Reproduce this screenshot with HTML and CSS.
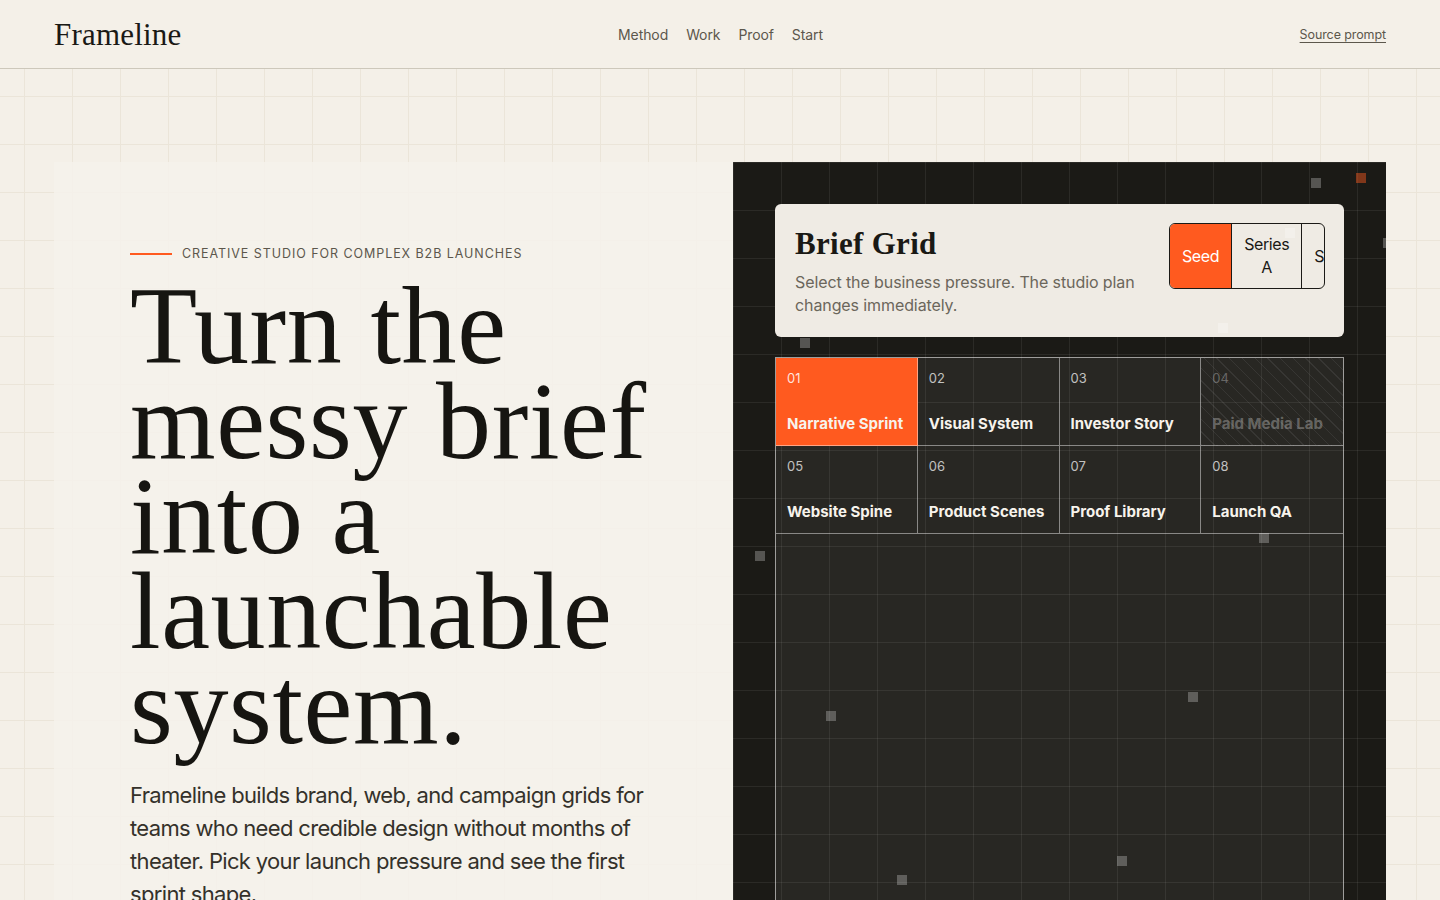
FILE: index.html
```html
<!DOCTYPE html>
<html lang="en">
<head>
    <meta charset="UTF-8">
    <meta name="viewport" content="width=device-width, initial-scale=1.0">
    <title>Frameline</title>
    <link rel="stylesheet" href="styles.css">
</head>
<body>

    <header class="site-header">
        <a class="logo" href="#">Frameline</a>
        <nav class="main-nav">
            <a href="#method">Method</a>
            <a href="#work">Work</a>
            <a href="#proof">Proof</a>
            <a href="#start">Start</a>
        </nav>
        <a class="source-link" href="#">Source prompt</a>
    </header>

    <main class="hero">
        <section class="hero-copy">
            <p class="eyebrow">Creative studio for complex B2B launches</p>
            <h1>Turn the messy brief into a launchable system.</h1>
            <p class="lede">Frameline builds brand, web, and campaign grids for teams who need credible design without months of theater. Pick your launch pressure and see the first sprint shape.</p>
        </section>

        <section class="studio-panel">
            <!-- Brief card with the stage picker -->
            <div class="brief-card">
                <div class="brief-text">
                    <h2>Brief Grid</h2>
                    <p>Select the business pressure. The studio plan changes immediately.</p>
                </div>
                <div class="stage-picker">
                    <button class="stage active">Seed</button>
                    <button class="stage">Series A</button>
                    <button class="stage">Scale</button>
                    <button class="stage">Enterprise</button>
                </div>
            </div>

            <!-- Sprint modules -->
            <div class="plan-board">
                <div class="tile-grid">
                    <div class="tile active"><span class="tile-num">01</span><span class="tile-name">Narrative Sprint</span></div>
                    <div class="tile"><span class="tile-num">02</span><span class="tile-name">Visual System</span></div>
                    <div class="tile"><span class="tile-num">03</span><span class="tile-name">Investor Story</span></div>
                    <div class="tile locked"><span class="tile-num">04</span><span class="tile-name">Paid Media Lab</span></div>
                    <div class="tile"><span class="tile-num">05</span><span class="tile-name">Website Spine</span></div>
                    <div class="tile"><span class="tile-num">06</span><span class="tile-name">Product Scenes</span></div>
                    <div class="tile"><span class="tile-num">07</span><span class="tile-name">Proof Library</span></div>
                    <div class="tile"><span class="tile-num">08</span><span class="tile-name">Launch QA</span></div>
                </div>
            </div>

            <!-- floating particles -->
            <span class="dot" style="left: 578px; top: 16px;"></span>
            <span class="dot hot" style="left: 623px; top: 11px;"></span>
            <span class="dot" style="left: 650px; top: 76px;"></span>
            <span class="dot" style="left: 552px; top: 66px;"></span>
            <span class="dot" style="left: 485px; top: 161px;"></span>
            <span class="dot" style="left: 67px; top: 176px;"></span>
            <span class="dot" style="left: 22px; top: 389px;"></span>
            <span class="dot" style="left: 526px; top: 371px;"></span>
            <span class="dot" style="left: 455px; top: 530px;"></span>
            <span class="dot" style="left: 93px; top: 549px;"></span>
            <span class="dot" style="left: 384px; top: 694px;"></span>
            <span class="dot" style="left: 164px; top: 713px;"></span>
        </section>
    </main>

</body>
</html>
```

FILE: styles.css
```css
body {
    margin: 0;
    font-family: Inter, "Noto Sans", sans-serif;
    color: #1a1915;
    background-color: #f4f0e8;
    background-image:
        linear-gradient(to right, #ebe5d9 1px, transparent 1px),
        linear-gradient(to bottom, #ebe5d9 1px, transparent 1px);
    background-size: 48px 48px;
    background-position: 24px 0;
}

a {
    color: inherit;
    text-decoration: none;
}

/* header */

.site-header {
    display: grid;
    grid-template-columns: 1fr auto 1fr;
    align-items: center;
    height: 68px;
    padding: 0 54px;
    background-color: #f4f0e8;
    border-bottom: 1px solid #cdc8bb;
}

.logo {
    font-family: "Liberation Serif", serif;
    font-size: 31px;
    letter-spacing: 0.2px;
    color: #1a1915;
    justify-self: start;
    padding-top: 2px;
}

.main-nav {
    display: flex;
    gap: 18px;
    padding-left: 1px;
}

.main-nav a {
    font-size: 14px;
    letter-spacing: -0.1px;
    color: #5c574c;
}

.source-link {
    justify-self: end;
    font-size: 12.5px;
    letter-spacing: -0.1px;
    color: #5c574c;
    text-decoration: underline;
    text-underline-offset: 3px;
}

/* hero */

.hero {
    display: grid;
    grid-template-columns: 679px 1fr;
    padding: 93px 54px 0;
}

.hero-copy {
    background-color: rgba(245, 241, 234, 0.88);
    padding: 84px 40px 0 76px;
}

.eyebrow {
    display: flex;
    align-items: center;
    gap: 10px;
    margin: 0 0 17px;
    font-size: 12.5px;
    line-height: 16px;
    letter-spacing: 0.075em;
    text-transform: uppercase;
    color: #5c574c;
}

.eyebrow::before {
    content: "";
    width: 42px;
    height: 2px;
    background-color: #ff5a1f;
}

h1 {
    margin: 0;
    max-width: 540px;
    font-family: "Liberation Serif", serif;
    font-weight: 400;
    font-size: 110px;
    line-height: 95px;
    letter-spacing: 0.6px;
    color: #161511;
}

.lede {
    margin: 25px 0 0;
    max-width: 525px;
    font-size: 22px;
    line-height: 33px;
    letter-spacing: -0.03em;
    color: #34312a;
}

/* dark studio panel */

.studio-panel {
    position: relative;
    overflow: hidden;
    min-height: 820px;
    padding: 42px;
    background-color: #1b1a16;
    background-image:
        linear-gradient(to right, rgba(255, 255, 255, 0.07) 1px, transparent 1px),
        linear-gradient(to bottom, rgba(255, 255, 255, 0.07) 1px, transparent 1px);
    background-size: 48px 48px;
}

.brief-card {
    display: flex;
    justify-content: space-between;
    align-items: flex-start;
    gap: 20px;
    padding: 19px 19px 20px 20px;
    background-color: #efebe4;
    border-radius: 6px;
}

.brief-text h2 {
    margin: 2px 0 0;
    font-family: "Liberation Serif", serif;
    font-weight: 700;
    font-size: 31px;
    line-height: 38px;
    letter-spacing: 0.3px;
    color: #1a1915;
}

.brief-text p {
    margin: 8px 0 0;
    max-width: 345px;
    font-size: 16px;
    line-height: 23px;
    letter-spacing: -0.1px;
    color: #6b665b;
}

.stage-picker {
    display: flex;
    flex: none;
    width: 154px;
    overflow: hidden;
    border: 1px solid #1b1a16;
    border-radius: 6px;
}

.stage {
    flex: none;
    max-width: 70px;
    padding: 9px 12px;
    font-family: Inter, "Noto Sans", sans-serif;
    font-size: 16px;
    line-height: 23px;
    letter-spacing: -0.4px;
    color: #1a1915;
    background: none;
    border: none;
    border-right: 1px solid #1b1a16;
    cursor: pointer;
}

.stage.active {
    background-color: #ff5a1f;
    color: white;
}

.plan-board {
    margin-top: 20px;
    min-height: 700px;
    background-color: rgba(255, 255, 255, 0.06);
    border: 1px solid rgba(255, 255, 255, 0.55);
}

.tile-grid {
    display: grid;
    grid-template-columns: repeat(4, 1fr);
}

.tile {
    display: flex;
    flex-direction: column;
    justify-content: space-between;
    height: 88px;
    padding: 12px 11px 11px;
    box-sizing: border-box;
    border-right: 1px solid rgba(255, 255, 255, 0.45);
    border-bottom: 1px solid rgba(255, 255, 255, 0.45);
}

.tile:nth-child(4n) {
    border-right: none;
}

.tile-num {
    font-size: 13px;
    line-height: 16px;
    color: rgba(255, 255, 255, 0.72);
}

.tile-name {
    font-size: 15px;
    line-height: 20px;
    font-weight: 700;
    color: #f7f3ec;
}

.tile.active {
    background-color: #ff5a1f;
}

.tile.active .tile-num {
    color: rgba(255, 255, 255, 0.85);
}

.tile.locked {
    background-image: repeating-linear-gradient(45deg, rgba(255, 255, 255, 0.07) 0 1px, transparent 1px 9px);
}

.tile.locked .tile-num,
.tile.locked .tile-name {
    color: rgba(255, 255, 255, 0.3);
}

.dot {
    position: absolute;
    width: 10px;
    height: 10px;
    background-color: rgba(255, 255, 255, 0.26);
}

.dot.hot {
    background-color: rgba(255, 90, 31, 0.45);
}
```
